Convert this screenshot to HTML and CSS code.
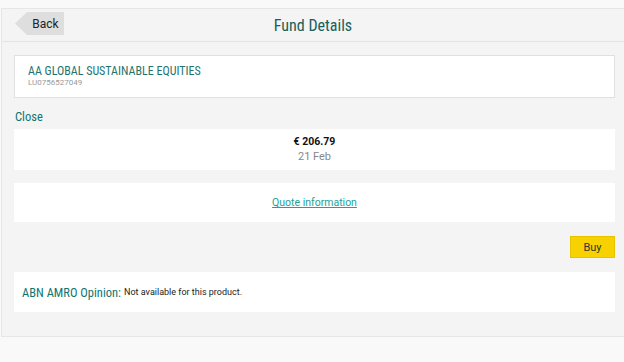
FILE: index.html
```html
<!DOCTYPE html>
<html lang="en">
<head>
<meta charset="UTF-8">
<meta name="viewport" content="width=device-width, initial-scale=1.0">
<title>Fund Details</title>
<link rel="stylesheet" href="styles.css">
</head>
<body>
<div class="page">
    <div class="header">
        <button type="button" class="back-btn">Back</button>
        <h1>Fund Details</h1>
    </div>
    <div class="content">
        <div class="card fund-card">
            <div class="fund-name">AA GLOBAL SUSTAINABLE EQUITIES</div>
            <div class="fund-isin">LU0756527049</div>
        </div>

        <div class="section-label">Close</div>
        <div class="card price-card">
            <div class="price">€ 206.79</div>
            <div class="price-date">21 Feb</div>
        </div>

        <div class="card quote-card">
            <a href="#" class="quote-link">Quote information</a>
        </div>

        <div class="actions">
            <button type="button" class="buy-btn">Buy</button>
        </div>

        <div class="card opinion-card">
            <span class="opinion-label">ABN AMRO Opinion:</span>
            <span class="opinion-text">Not available for this product.</span>
        </div>
    </div>
</div>
</body>
</html>
```

FILE: styles.css
```css
body {
    margin: 0;
    background-color: #f9f9f9;
    font-family: Roboto, "Liberation Sans", Arial, sans-serif;
}

.page {
    margin: 8px 0 0 1px;
    height: 329px;
    border: 1px solid #e6e6e6;
    border-right: none;
    background-color: #f4f4f4;
    box-sizing: border-box;
}

.header {
    position: relative;
    height: 32px;
    border-bottom: 1px solid #e4e4e4;
    display: flex;
    align-items: center;
    justify-content: center;
}

h1,
.fund-name,
.section-label,
.opinion-label {
    font-family: "Roboto Condensed", Roboto, sans-serif;
    font-weight: 400;
}

h1 {
    margin: 0;
    font-size: 16px;
    color: #17605b;
}

.back-btn {
    position: absolute;
    left: 13px;
    top: 3px;
    width: 49px;
    height: 23px;
    padding: 0 0 0 12px;
    border: none;
    background-color: #dedede;
    clip-path: polygon(12px 0, 100% 0, 100% 100%, 12px 100%, 0 50%);
    font-family: Roboto, "Liberation Sans", Arial, sans-serif;
    font-size: 12px;
    font-stretch: 90%;
    color: #222;
    cursor: pointer;
}

.content {
    padding: 13px 9px 0 12px;
}

.card {
    background-color: #fff;
}

.fund-card {
    height: 43px;
    box-sizing: border-box;
    border: 1px solid #e0e0e0;
    padding: 8px 13px 0;
}

.fund-name {
    font-size: 12px;
    color: #1f7470;
    line-height: 14px;
}

.fund-isin {
    font-size: 8px;
    color: #999;
    line-height: 9px;
}

.section-label {
    margin: 12px 0 6px 1px;
    font-size: 12.5px;
    color: #0f7570;
    line-height: 13px;
}

.price-card {
    height: 41px;
    padding-top: 6px;
    box-sizing: border-box;
    text-align: center;
}

.price {
    font-size: 10.5px;
    font-weight: 700;
    color: #111;
    line-height: 14px;
}

.price-date {
    font-size: 11px;
    color: #888;
    line-height: 15px;
}

.quote-card {
    margin-top: 13px;
    height: 39px;
    display: flex;
    align-items: center;
    justify-content: center;
}

.quote-link {
    font-size: 10.5px;
    color: #25a098;
}

.actions {
    display: flex;
    justify-content: flex-end;
    margin: 14px 0;
}

.buy-btn {
    width: 45px;
    height: 22px;
    padding: 0;
    border: 1px solid #e8c400;
    background-color: #f7d100;
    font-family: Roboto, "Liberation Sans", Arial, sans-serif;
    font-size: 11px;
    color: #333;
    cursor: pointer;
}

.opinion-card {
    height: 40px;
    display: flex;
    align-items: center;
    padding-left: 8px;
}

.opinion-label {
    font-size: 12.5px;
    color: #0f7570;
    margin-right: 3px;
}

.opinion-text {
    font-size: 9px;
    color: #222;
}
```
